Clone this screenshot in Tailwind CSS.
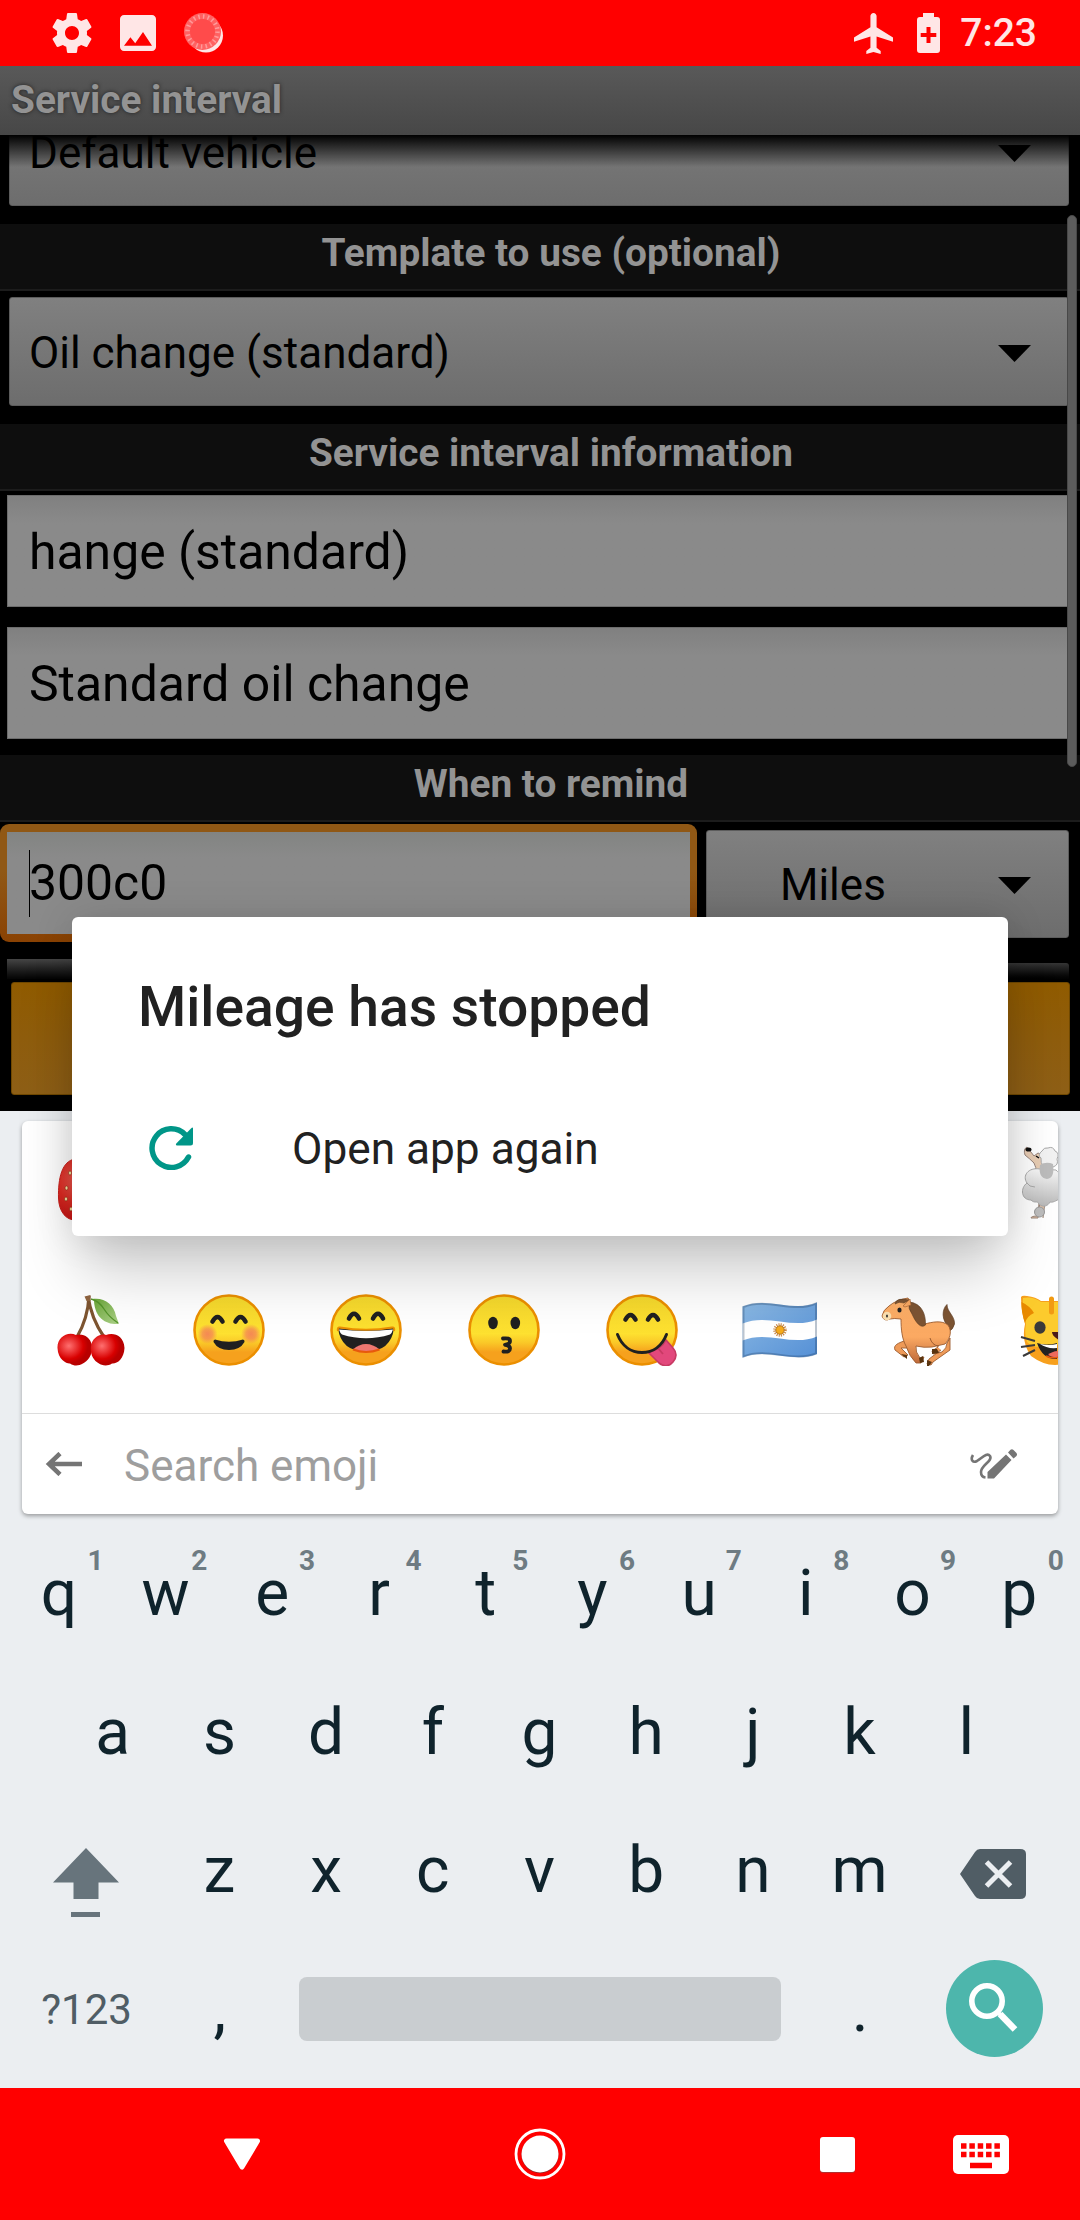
<!DOCTYPE html>
<html lang="en">
<head>
<meta charset="utf-8">
<title>Service interval</title>
<script src="https://cdn.jsdelivr.net/npm/@tailwindcss/browser@4"></script>
</head>
<body class="bg-black">
<div class="relative flex h-[2220px] w-[1080px] flex-col overflow-hidden font-[Roboto,sans-serif]">

  <!-- Status bar -->
  <header class="flex h-[66px] shrink-0 items-center justify-between bg-[#ff0000] pr-[43px] pl-12 text-[#ffe6e6]">
    <div class="flex items-center">
      <svg class="size-12" viewBox="0 0 24 24" fill="currentColor"><path d="M19.43 12.98c.04-.32.07-.64.07-.98s-.03-.66-.07-.98l2.11-1.65c.19-.15.24-.42.12-.64l-2-3.46c-.12-.22-.39-.3-.61-.22l-2.49 1c-.52-.4-1.08-.73-1.69-.98l-.38-2.65C14.46 2.18 14.25 2 14 2h-4c-.25 0-.46.18-.49.42l-.38 2.65c-.61.25-1.17.59-1.69.98l-2.49-1c-.23-.09-.49 0-.61.22l-2 3.46c-.13.22-.07.49.12.64l2.11 1.65c-.04.32-.07.65-.07.98s.03.66.07.98l-2.11 1.65c-.19.15-.24.42-.12.64l2 3.46c.12.22.39.3.61.22l2.49-1c.52.4 1.08.73 1.69.98l.38 2.65c.03.24.24.42.49.42h4c.25 0 .46-.18.49-.42l.38-2.65c.61-.25 1.17-.59 1.69-.98l2.49 1c.23.09.49 0 .61-.22l2-3.46c.12-.22.07-.49-.12-.64l-2.11-1.65zM12 15.5c-1.93 0-3.5-1.57-3.5-3.5s1.57-3.5 3.5-3.5 3.5 1.57 3.5 3.5-1.57 3.5-3.5 3.5z"/></svg>
      <svg class="ml-[18px] size-12" viewBox="0 0 24 24" fill="currentColor"><path d="M21 19V5c0-1.100-.9-2-2-2H5c-1.100 0-2 .9-2 2v14c0 1.100.9 2 2 2h14c1.100 0 2-.9 2-2zM8.200 14.100l2.400 3.010L14.500 11.500l4.500 6.900H5z"/></svg>
      <svg class="ml-[22px] size-10" viewBox="0 0 40 40">
        <circle cx="22" cy="22.500" r="17" fill="#ffe6e6"/>
        <circle cx="18.500" cy="18.500" r="18.500" fill="#ff6262"/>
        <circle cx="18.500" cy="18.500" r="12.500" fill="#ff4b4b"/>
        <circle cx="18.500" cy="18.500" r="15" fill="none" stroke="#ff9a9a" stroke-width="4.500" stroke-dasharray="1.500 3.212"/>
      </svg>
    </div>
    <div class="flex items-center">
      <svg class="h-[41px] w-[39px]" viewBox="2 2 19 20" preserveAspectRatio="none" fill="currentColor"><path d="M21 16v-2l-8-5V3.500c0-.83-.67-1.500-1.500-1.500S10 2.670 10 3.500V9l-8 5v2l8-2.500V19l-2 1.500V22l3.500-1 3.500 1v-1.500L13 19v-5.500l8 2.500z"/></svg>
      <svg class="ml-6 h-10 w-[23px]" viewBox="0 0 23 40"><path d="M6 0h11v4h3a3 3 0 0 1 3 3v30a3 3 0 0 1-3 3H3a3 3 0 0 1-3-3V7a3 3 0 0 1 3-3h3z" fill="currentColor"/><path d="M11.500 14v16M3.700 22h15.600" stroke="#ff0000" stroke-width="4"/></svg>
      <span class="ml-[20px] text-[39px] leading-[68px] font-medium">7:23</span>
    </div>
  </header>

  <!-- Title bar -->
  <div class="z-10 flex h-[69px] shrink-0 items-center bg-linear-to-b from-[#595959] to-[#474747] pl-[11px]">
    <h1 class="text-[38.800px] font-bold text-[#939393] [text-shadow:0_0_4px_#222]">Service interval</h1>
  </div>

  <!-- Dimmed form -->
  <main class="relative flex h-[976px] shrink-0 flex-col overflow-hidden bg-black">
    <div class="mt-[-37px] mr-[11px] ml-[9px] flex h-[108px] shrink-0 items-center justify-between rounded-[3px] border border-[#5c5c5c] bg-linear-to-b from-[#808080] to-[#6d6d6d] pt-[2px] pr-[37px] pl-[19px]">
      <span class="text-[44px]">Default vehicle</span>
      <svg class="h-[17px] w-[33px]" viewBox="0 0 33 17"><path d="M0 0h33L16.500 17z"/></svg>
    </div>
    <h2 class="mt-[18px] flex h-[67px] shrink-0 items-center justify-center border-b-2 border-[#1c1c1c] bg-[#0e0e0e] pb-[7px] pl-[22px] text-[38.800px] font-bold text-[#939393]">Template to use (optional)</h2>
    <div class="mt-[6px] mr-[11px] ml-[9px] flex h-[109px] shrink-0 items-center justify-between rounded-[3px] border border-[#5c5c5c] bg-linear-to-b from-[#808080] to-[#6d6d6d] pt-[3px] pr-[37px] pl-[19px]">
      <span class="text-[44px]">Oil change (standard)</span>
      <svg class="h-[17px] w-[33px]" viewBox="0 0 33 17"><path d="M0 0h33L16.500 17z"/></svg>
    </div>
    <h2 class="mt-[18px] flex h-[67px] shrink-0 items-center justify-center border-b-2 border-[#1c1c1c] bg-[#0e0e0e] pb-[7px] pl-[22px] text-[38.800px] font-bold text-[#939393]">Service interval information</h2>
    <div class="mx-[7px] mt-[4px] flex h-[112px] shrink-0 items-center border border-[#6c6c6c] bg-linear-to-b from-[#808080] to-[#8a8a8a] to-25% pt-[2px] pl-[21px] text-[49.900px]">hange (standard)</div>
    <div class="mx-[7px] mt-[20px] flex h-[112px] shrink-0 items-center border border-[#6c6c6c] bg-linear-to-b from-[#808080] to-[#8a8a8a] to-25% pt-[2px] pl-[21px] text-[49.900px]">Standard oil change</div>
    <h2 class="mt-[16px] flex h-[67px] shrink-0 items-center justify-center border-b-2 border-[#1c1c1c] bg-[#0e0e0e] pb-[7px] pl-[22px] text-[38.800px] font-bold text-[#939393]">When to remind</h2>
    <div class="mt-[2px] flex h-[118px] shrink-0 gap-[9px]">
      <div class="w-[697px] rounded-[9px] bg-linear-to-b from-[#905815] from-40% to-[#8a4203] px-[7px] py-[8px]">
        <div class="flex h-full items-center bg-linear-to-b from-[#828482] to-[#8a8a8a] to-25% pl-[22px]">
          <span class="h-[67px] w-px bg-black"></span><span class="-ml-px text-[49.900px]">300c0</span>
        </div>
      </div>
      <div class="mt-[6px] flex h-[108px] w-[363px] items-center justify-between rounded-[3px] border border-[#5c5c5c] bg-linear-to-b from-[#808080] to-[#6d6d6d] pt-[2px] pr-[37px] pl-[73px]">
        <span class="text-[44px]">Miles</span>
        <svg class="h-[17px] w-[33px]" viewBox="0 0 33 17"><path d="M0 0h33L16.500 17z"/></svg>
      </div>
    </div>
    <div class="mt-[17px] mr-[11px] ml-[7px] flex h-[20px] shrink-0 items-end justify-between">
      <div class="h-[20px] w-[690px] bg-linear-to-b from-[#454545] to-[#050505]"></div>
      <div class="h-[16px] w-[363px] rounded-t-[3px] bg-linear-to-b from-[#353535] to-[#020202]"></div>
    </div>
    <div class="mt-[3px] mr-[10px] ml-[11px] h-[113px] shrink-0 rounded-[3px] border border-[#704800] bg-linear-to-b from-[#905b00] to-[#8e5f16]"></div>

    <!-- Fading edge and scrollbar lie over the form -->
    <div class="absolute inset-x-0 top-0 h-[32px] bg-linear-to-b from-black to-transparent"></div>
    <div class="absolute top-[80px] right-[3px] h-[552px] w-[10px] rounded-full border border-[#484848] bg-[#5c5c5c]"></div>
  </main>

  <!-- Keyboard -->
  <section class="flex h-[977px] shrink-0 flex-col bg-[#ebeef1] pt-[10px] text-[#0f232c]">
    <div class="mr-[22px] ml-[22px] flex h-[393px] shrink-0 flex-col overflow-hidden rounded-[6px] bg-white shadow-[0_2px_4px_rgba(0,0,0,0.35)]">
      <div class="mt-[-10px] flex h-[146px] w-[1103px] shrink-0 items-center justify-between">
        <div class="flex w-[137.800px] justify-center">
          <svg class="size-[72px]" viewBox="0 0 72 72">
            <defs><radialGradient id="berry" cx=".4" cy=".35" r=".7"><stop offset="0" stop-color="#ef6a5e"/><stop offset=".6" stop-color="#dd2a22"/><stop offset="1" stop-color="#c21313"/></radialGradient></defs>
            <path d="M20 11C7 13 3 30 3.500 50C4 65 12 72 20 72C45 70 66 50 66 30C66 12 40 8 20 11z" fill="url(#berry)" stroke="#c8201c"/>
            <g fill="#ffe9a8" stroke="#8a2a10" stroke-width=".6"><ellipse cx="15" cy="25" rx="1.500" ry="2"/><ellipse cx="11.500" cy="40" rx="1.500" ry="2"/><ellipse cx="11" cy="51" rx="1.500" ry="2"/><ellipse cx="16" cy="61" rx="1.500" ry="2"/></g>
          </svg>
        </div>
        <div class="flex w-[137.800px] justify-center">
          <svg class="size-[72px] overflow-visible" viewBox="0 0 72 72">
            <defs><linearGradient id="wool" x2="0" y2="1"><stop offset="0" stop-color="#f7f7f7"/><stop offset="1" stop-color="#b9b9b9"/></linearGradient></defs>
            <path d="M19 54l-1 16h-7q0-2 7-2l2-14h5l-2 16" fill="#e5c4a8" stroke="#9a8578"/>
            <path d="M7-1Q3 1 5 7Q10 11 14 15Q17 19 15 25H23L25 8L18 5L14 8z" fill="#e8cdb4" stroke="#97837a"/>
            <path d="M20 21C8 19 2 28 7 35C0 40 1 52 11 52C15 56 17 52 19 56C23 60 28 58 30 54C34 55 38 51 40 51L50 40V25Q38 26 36 22z" fill="url(#wool)" stroke="#a9a9a9"/>
            <path d="M7 35Q9 39 15 39" fill="none" stroke="#a9a9a9"/>
            <path d="M22 3Q24-1 28 0Q33-2 35 3Q40 5 37 11Q39 17 33 19L24 20Q20 14 21 10Q17 7 22 3z" fill="#f2f2f2" stroke="#a9a9a9"/>
            <path d="M20 17Q18 30 27 31Q35 30 33 16Q26 13 20 17z" fill="#bcbcbc"/>
            <circle cx="19.500" cy="64" r="5" fill="#bdbdbd" stroke="#999"/>
            <ellipse cx="8.500" cy="1.500" rx="3" ry="2" fill="#111"/><path d="M16 8l3 2" stroke="#111" stroke-width="1.500"/>
          </svg>
        </div>
      </div>
      <div class="flex h-[146px] w-[1103px] shrink-0 items-center">
        <div class="flex w-[137.800px] shrink-0 justify-center">
          <svg class="size-[72px]" viewBox="0 0 72 72">
            <defs>
              <radialGradient id="cherry" cx=".33" cy=".38" r=".55"><stop offset="0" stop-color="#ff7070"/><stop offset=".75" stop-color="#d80000"/><stop offset="1" stop-color="#b80000"/></radialGradient>
              <linearGradient id="leaf" x2="1" y2="1"><stop offset="0" stop-color="#66a334"/><stop offset="1" stop-color="#aed28a"/></linearGradient>
            </defs>
            <path d="M34 2Q33 24 22 43M33 2Q36 24 49 43" fill="none" stroke="#7d5430" stroke-width="3.200"/>
            <path d="M29.500 2.500l6-1.500v6h-4z" fill="#8f6440"/>
            <path d="M37 5C49 3 59 10 61 22L64 30C52 31 40 25 39 7z" fill="url(#leaf)"/>
            <path d="M36 5Q44 7 49 15T63 29" fill="none" stroke="#53932a" stroke-width="1.300"/>
            <path d="M21 41C12 37 2 44 2.500 54C3 66 12 70 15 69.500C20 73 25 71 27 70C34 67 38 59 37 51C35 43 28 39 21 41z" fill="url(#cherry)"/>
            <path d="M51 41C58 38 69 41 69.500 54C69 65 62 70 57 69.500C52 73 46 71 44 69.500C38 66 35 60 36 52C37 45 44 39 51 41z" fill="url(#cherry)"/>
          </svg>
        </div>
        <div class="flex w-[137.800px] shrink-0 justify-center">
          <svg class="size-[72px]" viewBox="0 0 72 72">
            <defs>
              <linearGradient id="face" x2="0" y2="1"><stop offset="0" stop-color="#f4d72c"/><stop offset=".55" stop-color="#fee130"/><stop offset=".68" stop-color="#fac928"/><stop offset=".82" stop-color="#f6a11d"/></linearGradient>
              <radialGradient id="blush"><stop offset="0" stop-color="#f3795a" stop-opacity=".85"/><stop offset=".5" stop-color="#f3795a" stop-opacity=".65"/><stop offset="1" stop-color="#f3795a" stop-opacity="0"/></radialGradient>
            </defs>
            <circle cx="36" cy="36" r="34.500" fill="url(#face)" stroke="#eb8f00" stroke-width="2.600"/>
            <circle cx="14.500" cy="40" r="10" fill="url(#blush)"/><circle cx="58" cy="40" r="10" fill="url(#blush)"/>
            <path d="M19.500 27.500Q24.500 18.500 29.500 27.500M42.500 27.500Q47.500 18.500 52.500 27.500" fill="none" stroke="#202020" stroke-width="4.600" stroke-linecap="round"/>
            <path d="M22 45.500Q36 50 50 45.500Q52 46 51.500 48Q47 56 36 56T20.500 48Q20 46 22 45.500z" fill="#202020"/>
          </svg>
        </div>
        <div class="flex w-[137.800px] shrink-0 justify-center">
          <svg class="size-[72px]" viewBox="0 0 72 72">
            <circle cx="36" cy="36" r="34.500" fill="url(#face)" stroke="#eb8f00" stroke-width="2.600"/>
            <path d="M19 24.500Q24 15 29 24.500M43 24.500Q48 15 53 24.500" fill="none" stroke="#202020" stroke-width="4.600" stroke-linecap="round"/>
            <path d="M8 34Q36 38 64 34Q61 57.500 36 57.500T8 34z" fill="#202020"/>
            <path d="M9 35.500Q36 38 63 35.500Q62 39 60 40.500Q36 48 12 40.500Q10 39 9 35.500z" fill="#fff"/>
            <path d="M23 55.500Q29 50 36 50T49.500 55.500Q36 60 23 55.500z" fill="#ed7770"/>
            <path d="M23 55.500Q36 60.500 49.500 55.500" fill="none" stroke="#e8590c" stroke-width="2"/>
            <path d="M8 37Q7 33 10 33.500Q36 38 62 33.500Q65 33 64 37" fill="none" stroke="#eb8f00" stroke-width="2"/>
          </svg>
        </div>
        <div class="flex w-[137.800px] shrink-0 justify-center">
          <svg class="size-[72px]" viewBox="0 0 72 72">
            <circle cx="36" cy="36" r="34.500" fill="url(#face)" stroke="#eb8f00" stroke-width="2.600"/>
            <ellipse cx="25" cy="29" rx="4.800" ry="6.200" fill="#202020"/><ellipse cx="47.300" cy="29" rx="4.800" ry="6.200" fill="#202020"/>
            <path d="M35 44.500Q42 43.500 42 47Q42 50 37 50.800Q42 51.500 42 54.500Q42 58.500 35.500 57.500" fill="none" stroke="#202020" stroke-width="3.800" stroke-linecap="round" stroke-linejoin="round"/>
          </svg>
        </div>
        <div class="flex w-[137.800px] shrink-0 justify-center">
          <svg class="size-[72px]" viewBox="0 0 72 72">
            <circle cx="36" cy="36" r="34.500" fill="url(#face)" stroke="#eb8f00" stroke-width="2.600"/>
            <path d="M19.500 25.500Q24.500 16.500 29.500 25.500M42 25.500Q47 16.500 52 25.500" fill="none" stroke="#202020" stroke-width="4.600" stroke-linecap="round"/>
            <path d="M42 58Q55 56 60 46L67 54Q73 61 67 68T53 69z" fill="#e2487c" stroke="#c73a63" stroke-width="1.600"/>
            <path d="M51 53l6 7" stroke="#c73a63" stroke-width="1.800"/>
            <path d="M11.500 40.500C16 52 25 58.500 36 58.500S56 52 60.500 40.500" fill="none" stroke="#202020" stroke-width="3" stroke-linecap="round"/>
          </svg>
        </div>
        <div class="flex w-[137.800px] shrink-0 justify-center">
          <svg class="h-[72px] w-[76px]" viewBox="-2 0 76 72">
            <defs><linearGradient id="sky" x2="1" y2="1"><stop offset="0" stop-color="#8ab8e3"/><stop offset="1" stop-color="#5590d6"/></linearGradient></defs>
            <path d="M-1.500 12.500C23 2 49 19 73 8.500V60C49 70 23 53 -1.500 63.500z" fill="url(#sky)"/>
            <path d="M-1.500 29.500C23 19 49 36 73 25.500V42.500C49 53 23 36 -1.500 46.500z" fill="#fff"/>
            <circle cx="36" cy="36" r="5" fill="none" stroke="#c98a4b" stroke-width="3.500" stroke-dasharray="1 .96"/><circle cx="36" cy="36" r="4.200" fill="#f6ab1c" stroke="#a86b1b" stroke-width=".8"/>
            <path d="M-.5 13C23 3 49 20 72 9.500V59.500C49 69 23 52.500 -.5 62.500z" fill="none" stroke="#1f3a5f" stroke-opacity=".3" stroke-width="2"/>
          </svg>
        </div>
        <div class="flex w-[137.800px] shrink-0 justify-center">
          <svg class="h-[72px] w-[74px]" viewBox="-1 0 74 72">
            <defs><linearGradient id="coat" x2="0" y2="1"><stop offset="0" stop-color="#fcaf68"/><stop offset=".6" stop-color="#fba962"/><stop offset="1" stop-color="#bf6a3a"/></linearGradient></defs>
            <path d="M67 33C59 26 60 15 65 10.500C65 18 73 22 72.500 30Q71 36 66 38z" fill="#7c5433" stroke="#5e3e24" stroke-width=".7"/>
            <path d="M25 46C16 49 11 51 13 56L22 63L26 61L19 54L28 54zM50 48Q58 50 56 53L50 57L51 60L60 58Q65 54 65 49L68 44V56L51 68L49 71L45 70L47 65L59 56" fill="#ee9a58" stroke="#9c5c30" stroke-width=".9"/>
            <path d="M26 4L28 8L30 12C33 20 37 27 43 30C50 28 60 26 66 31C71 38 67 46 63 50L50 53Q42 54 34 52Q33 58 38 64L42 63L39 69H34Q27 62 24 52C20 45 19 35 19 25Q12 24 8 25Q2 28 0 22Q1 16 7 12Q14 6 26 4z" fill="url(#coat)" stroke="#9c5c30" stroke-width=".9"/>
            <path d="M27 8C40 9 44 21 43.500 31C39 35 34 29 30 20Q26 15 27 8zM13 10Q14 3 27 6L22 9Q17 7 13 10z" fill="#7c5433" stroke="#5e3e24" stroke-width=".6"/>
            <path d="M21 12L28 5L29 11L23 13z" fill="#f8a862" stroke="#9c5c30" stroke-width=".6"/>
            <circle cx="5" cy="22" r="4.300" fill="#fbe0b0"/><ellipse cx="5" cy="22" rx=".9" ry="1.600" fill="#222"/>
            <ellipse cx="17.500" cy="16" rx="2.100" ry="2.600" fill="#222"/>
            <path d="M48 44Q50 51 56 52" fill="none" stroke="#9c5c30" stroke-width="1"/>
            <path d="M37 64l4-2l1 6l-4 1zM45 66l5 2l-3 4h-2zM19 60l6 1v4zM50 55l5 0l2 4l-7 1z" fill="#5a3410"/>
          </svg>
        </div>
        <div class="flex w-[137.800px] shrink-0 justify-center">
          <svg class="size-[72px]" viewBox="0 0 72 72">
            <path d="M2 3Q3 1 8 2Q17 3 22 7L50 7Q60 1 68 2L70 10L64 28Q72 48 60 62Q48 71 36 71T12 62Q2 48 6 30Q2 16 2 3z" fill="#f7a01d"/>
            <path d="M4 4Q14 2 22 8L50 8Q60 2 67 4Q68 16 64 30Q68 42 62 52Q50 56 36 50Q16 57 8 48Q5 40 7 30Q3 16 4 4z" fill="#fccb2d"/>
            <path d="M2.500 8Q11 12 15 19Q8 22 6 29Q2 18 2.500 8z" fill="#e88a00"/>
            <path d="M32.500 5v13" stroke="#f19a12" stroke-width="5" stroke-linecap="round"/>
            <ellipse cx="21" cy="33.500" rx="5.600" ry="6.200" fill="#3a3a3a"/>
            <path d="M33 38h12l-5 8Q33 42 33 38z" fill="#4a1a18"/>
            <path d="M18 49Q28 52 38 49V65Q24 66 18 49z" fill="#222"/><path d="M21 50Q30 52 38 50V54Q28 55 21 50z" fill="#fff"/>
            <path d="M29 61Q33 57 40 57V63Q34 64 29 61z" fill="#ee6a5c"/><path d="M27 62Q33 65 40 63" fill="none" stroke="#e85a0c" stroke-width="1.500"/>
            <path d="M2 43L16 47M2 53L16 51M4 62L16 56" stroke="#3a3a3a" stroke-width="2"/>
          </svg>
        </div>
      </div>
      <div class="mt-[10px] flex flex-1 items-center border-t border-[#dddddd] pr-[40px] pl-[23px]">
        <svg class="h-[24px] w-[37px]" viewBox="0 0 37 24" fill="none" stroke="#757575" stroke-width="4.500"><path d="M37 12H4M15 1.500L4 12L15 22.500"/></svg>
        <span class="ml-[42px] pt-[3px] text-[44px] text-[#9e9e9e]">Search emoji</span>
        <svg class="ml-auto h-[32px] w-[48px]" viewBox="0 0 48 32"><path d="M3 7C0 12 3 15 7 13C12 10 17 4 20 8C23 13 11 17 11 24Q11 29 15.500 29.500" fill="none" stroke="#757575" stroke-width="2.600"/><path d="M17.500 24L36 6.500L41.500 12L24 30.500H17.500zM38 4.500L40.500 1.800Q42 .6 43.500 2L46.500 5Q47.700 6.500 46.500 8L43.500 10.500z" fill="#757575"/></svg>
      </div>
    </div>

    <div class="mt-[10px] flex h-[138.500px] shrink-0 items-center justify-center pt-[2px] pr-[2px] text-[64px] leading-none">
      <div class="relative w-[106.700px] text-center">q<span class="absolute top-[-15px] left-[90px] -translate-x-1/2 text-[28px] leading-none font-bold text-[#6e7b82]">1</span></div>
      <div class="relative w-[106.700px] text-center">w<span class="absolute top-[-15px] left-[87px] -translate-x-1/2 text-[28px] leading-none font-bold text-[#6e7b82]">2</span></div>
      <div class="relative w-[106.700px] text-center">e<span class="absolute top-[-15px] left-[88px] -translate-x-1/2 text-[28px] leading-none font-bold text-[#6e7b82]">3</span></div>
      <div class="relative w-[106.700px] text-center">r<span class="absolute top-[-15px] left-[88px] -translate-x-1/2 text-[28px] leading-none font-bold text-[#6e7b82]">4</span></div>
      <div class="relative w-[106.700px] text-center">t<span class="absolute top-[-15px] left-[88px] -translate-x-1/2 text-[28px] leading-none font-bold text-[#6e7b82]">5</span></div>
      <div class="relative w-[106.700px] text-center">y<span class="absolute top-[-15px] left-[88px] -translate-x-1/2 text-[28px] leading-none font-bold text-[#6e7b82]">6</span></div>
      <div class="relative w-[106.700px] text-center">u<span class="absolute top-[-15px] left-[88px] -translate-x-1/2 text-[28px] leading-none font-bold text-[#6e7b82]">7</span></div>
      <div class="relative w-[106.700px] text-center">i<span class="absolute top-[-15px] left-[89px] -translate-x-1/2 text-[28px] leading-none font-bold text-[#6e7b82]">8</span></div>
      <div class="relative w-[106.700px] text-center">o<span class="absolute top-[-15px] left-[89px] -translate-x-1/2 text-[28px] leading-none font-bold text-[#6e7b82]">9</span></div>
      <div class="relative w-[106.700px] text-center">p<span class="absolute top-[-15px] left-[90px] -translate-x-1/2 text-[28px] leading-none font-bold text-[#6e7b82]">0</span></div>
    </div>
    <div class="flex h-[138.500px] shrink-0 items-center justify-center pt-[2px] pr-[1px] text-center text-[64px] leading-none">
      <div class="w-[106.700px]">a</div><div class="w-[106.700px]">s</div><div class="w-[106.700px]">d</div><div class="w-[106.700px]">f</div><div class="w-[106.700px]">g</div><div class="w-[106.700px]">h</div><div class="w-[106.700px]">j</div><div class="w-[106.700px]">k</div><div class="w-[106.700px]">l</div>
    </div>
    <div class="flex h-[138.500px] shrink-0 items-center justify-center pt-[2px] pr-[1px] text-center text-[64px] leading-none">
      <div class="flex w-[160px] pt-[22px] pl-[47px]"><svg class="h-[69px] w-[66px]" viewBox="0 0 66 69" fill="#67747c"><path d="M33 0L66 34.500H45.500V51H20.500V34.500H0zM18 64h29v5H18z"/></svg></div>
      <div class="w-[106.700px]">z</div><div class="w-[106.700px]">x</div><div class="w-[106.700px]">c</div><div class="w-[106.700px]">v</div><div class="w-[106.700px]">b</div><div class="w-[106.700px]">n</div><div class="w-[106.700px]">m</div>
      <div class="flex w-[160px] justify-end pt-[6px] pr-[47px]"><svg class="h-[50px] w-[66px]" viewBox="0 0 66 50"><path d="M20 0H60Q66 0 66 5V45Q66 50 60 50H20Q17 50 15 47L0 25L15 3Q17 0 20 0z" fill="#505d65"/><path d="M26.500 13L50.500 37M50.500 13L26.500 37" stroke="#ebeef1" stroke-width="5"/></svg></div>
    </div>
    <div class="flex h-[138.500px] shrink-0 items-center justify-center text-center text-[64px] leading-none">
      <div class="w-[160px] pt-[2px] text-[42px] text-[#505d65]">?123</div>
      <div class="w-[106.700px] pt-[2px]">,</div>
      <div class="w-[533.500px] px-[26px]"><div class="h-16 rounded-[8px] bg-[#c9cdd0]"></div></div>
      <div class="w-[106.700px] pt-[2px]">.</div>
      <div class="flex w-[160px] justify-center pl-[2px]">
        <div class="size-[97px] rounded-full bg-[#4db6ac]"><svg class="size-[97px]" viewBox="0 0 97 97" fill="none" stroke="#fff"><circle cx="41" cy="41" r="15.200" stroke-width="5.600"/><path d="M54 54L69 69.500" stroke-width="6.500"/><path d="M50 51L56 56" stroke-width="4"/></svg></div>
      </div>
    </div>
  </section>

  <!-- Navigation bar -->
  <nav class="flex h-[132px] shrink-0 items-center bg-[#ff0000]">
    <svg class="ml-[223px] h-[32px] w-[38px]" viewBox="0 0 38 32"><path d="M3.500 3H34.500L19 29z" fill="#fff" stroke="#fff" stroke-width="5" stroke-linejoin="round"/></svg>
    <svg class="ml-[253px] size-[52px]" viewBox="0 0 52 52"><circle cx="26" cy="26" r="24" fill="none" stroke="#fff" stroke-width="2.800"/><circle cx="26" cy="26.700" r="18.500" fill="#8a2a2a"/><circle cx="26" cy="26" r="18.500" fill="#fff"/></svg>
    <div class="ml-[254px] size-[35px] rounded-[3px] bg-white shadow-[0_1px_1px_#a33]"></div>
    <svg class="ml-[98px] h-[39px] w-[56px]" viewBox="0 0 56 39"><rect width="56" height="39" rx="5" fill="#fff"/><path d="M8 11h40M8 19.500h40" stroke="#ff0000" stroke-width="5.500" stroke-dasharray="5.500 2.850"/><path d="M17 30.500h22" stroke="#ff0000" stroke-width="5.500"/></svg>
  </nav>

  <!-- Crash dialog -->
  <div role="dialog" class="absolute top-[917px] left-[72px] z-20 h-[319px] w-[936px] rounded-[6px] bg-white pl-[66px] text-[#212121] shadow-[0_44px_58px_-8px_rgba(0,0,0,0.2),0_0_40px_rgba(0,0,0,0.12)]">
    <h2 class="mt-[57px] text-[55.200px] leading-[66px] font-medium">Mileage has stopped</h2>
    <div class="mt-[68px] flex h-[80px] items-center pl-[11px]">
      <svg class="h-[44px] w-[44px]" viewBox="0 0 44 44"><path d="M39.500 31A19.300 19.300 0 1 1 36 8.500" fill="none" stroke="#009688" stroke-width="5.500" stroke-linecap="round"/><path d="M44 2V17Q44 19.500 41.500 19.500H28Q26 19 27.500 17.300L42 2.500Q43.500 1 44 2z" fill="#009688"/></svg>
      <span class="ml-[99px] pt-[3px] text-[44.200px]">Open app again</span>
    </div>
  </div>
</div>
</body>
</html>
